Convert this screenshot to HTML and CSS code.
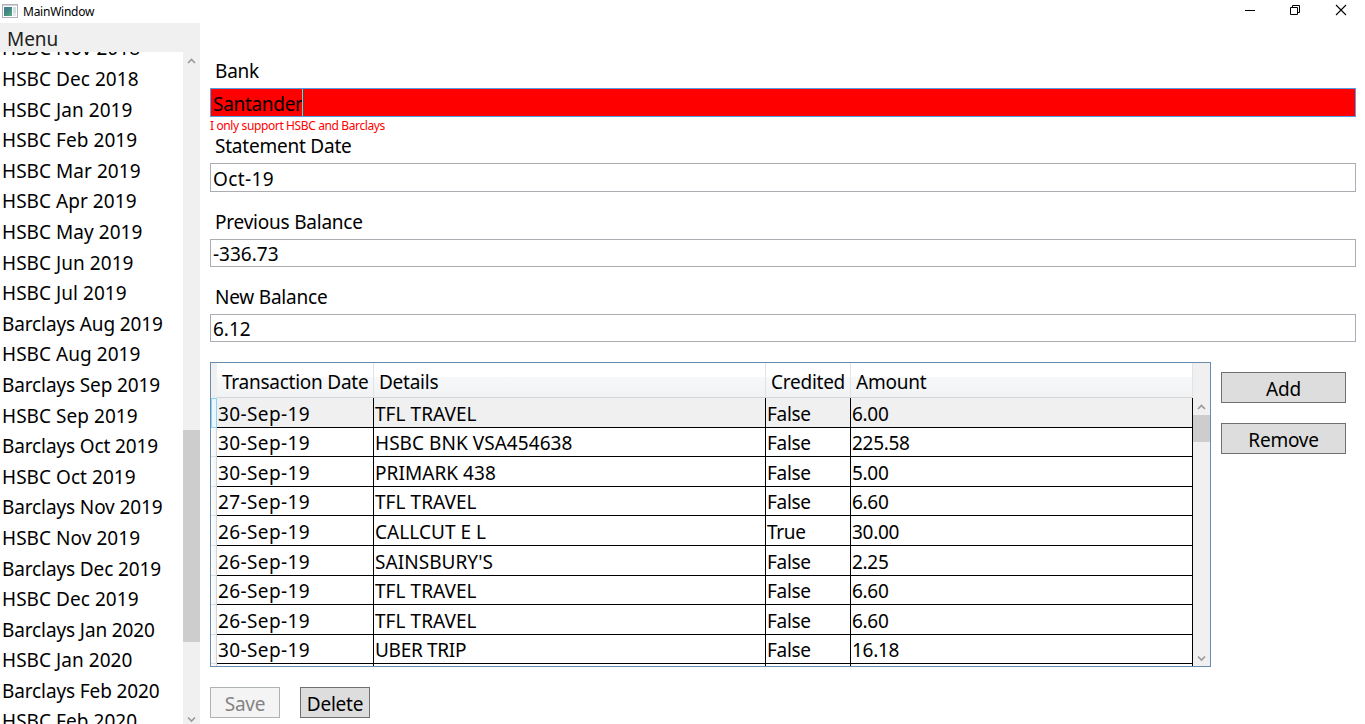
FILE: index.html
```html
<!DOCTYPE html>
<html lang="en">
<head>
<meta charset="utf-8">
<title>MainWindow</title>
<link rel="stylesheet" href="styles.css">
</head>
<body>
<div class="window">
  <header class="titlebar">
    <svg class="app-icon" width="16" height="14" viewBox="0 0 16 14"><defs><linearGradient id="pane" x2="1" y2="1"><stop offset="0" stop-color="#4a7396"/><stop offset=".5" stop-color="#3f8a85"/><stop offset="1" stop-color="#62ad7c"/></linearGradient></defs><rect x=".5" y=".5" width="15" height="13" fill="#fff" stroke="#b0b2ba"/><rect x="1" y="1" width="14" height="1" fill="#d4d4da"/><rect x="2" y="3" width="8" height="9" fill="url(#pane)"/><rect x="11" y="3" width="3" height="6" fill="#cfe0df"/><rect x="11" y="9" width="3" height="3" fill="#e6e9ee"/></svg>
    <span class="title">MainWindow</span>
    <div class="controls">
      <svg width="46" height="22" viewBox="0 0 46 22"><path d="M11 10.5h10" stroke="#000"/></svg>
      <svg width="46" height="22" viewBox="0 0 46 22"><path d="M10.500 7.500h7v7h-7zM12.500 7V5.500h7v7H18" fill="none" stroke="#000"/></svg>
      <svg width="46" height="22" viewBox="0 0 46 22"><path d="M10 5l10 10M20 5L10 15" stroke="#000" stroke-width="1.1"/></svg>
    </div>
  </header>
  <div class="body">
    <aside class="sidebar">
      <div class="menu">Menu</div>
      <div class="list-wrap">
        <ul class="list">
          <li>HSBC Nov 2018</li><li>HSBC Dec 2018</li><li>HSBC Jan 2019</li><li>HSBC Feb 2019</li><li>HSBC Mar 2019</li><li>HSBC Apr 2019</li><li>HSBC May 2019</li><li>HSBC Jun 2019</li><li>HSBC Jul 2019</li><li class="long">Barclays Aug 2019</li><li>HSBC Aug 2019</li><li class="long">Barclays Sep 2019</li><li>HSBC Sep 2019</li><li class="long">Barclays Oct 2019</li><li>HSBC Oct 2019</li><li class="long">Barclays Nov 2019</li><li>HSBC Nov 2019</li><li class="long">Barclays Dec 2019</li><li>HSBC Dec 2019</li><li class="long">Barclays Jan 2020</li><li>HSBC Jan 2020</li><li class="long">Barclays Feb 2020</li><li>HSBC Feb 2020</li>
        </ul>
        <div class="scrollbar">
          <svg width="17" height="17" viewBox="0 0 17 17"><path d="M5 11l3.500-3.500L12 11" class="chev"/></svg>
          <div class="thumb list-thumb"></div>
          <svg class="down" width="17" height="17" viewBox="0 0 17 17"><path d="M5 10.500l3.500 3.500L12 10.500" class="chev"/></svg>
        </div>
      </div>
    </aside>
    <main class="main">
      <div class="field"><label>Bank</label><div class="input invalid"><span class="value">Santander</span><i class="caret"></i></div><div class="error">I only support HSBC and Barclays</div></div>
      <div class="field"><label>Statement Date</label><div class="input date">Oct-19</div></div>
      <div class="field"><label>Previous Balance</label><div class="input number">-336.73</div></div>
      <div class="field"><label>New Balance</label><div class="input number">6.12</div></div>
      <div class="data">
        <div class="grid">
          <div class="grid-main">
            <div class="head"><span class="rh"></span><span>Transaction Date</span><span>Details</span><span>Credited</span><span>Amount</span></div>
            <div class="row current"><span class="rh"></span><span class="date">30-Sep-19</span><span class="details">TFL TRAVEL</span><span>False</span><span>6.00</span></div>
            <div class="row"><span class="rh"></span><span class="date">30-Sep-19</span><span class="details">HSBC BNK VSA454638</span><span>False</span><span>225.58</span></div>
            <div class="row"><span class="rh"></span><span class="date">30-Sep-19</span><span class="details">PRIMARK 438</span><span>False</span><span>5.00</span></div>
            <div class="row"><span class="rh"></span><span class="date">27-Sep-19</span><span class="details">TFL TRAVEL</span><span>False</span><span>6.60</span></div>
            <div class="row"><span class="rh"></span><span class="date">26-Sep-19</span><span class="details">CALLCUT E L</span><span>True</span><span>30.00</span></div>
            <div class="row"><span class="rh"></span><span class="date">26-Sep-19</span><span class="details">SAINSBURY'S</span><span>False</span><span>2.25</span></div>
            <div class="row"><span class="rh"></span><span class="date">26-Sep-19</span><span class="details">TFL TRAVEL</span><span>False</span><span>6.60</span></div>
            <div class="row"><span class="rh"></span><span class="date">26-Sep-19</span><span class="details">TFL TRAVEL</span><span>False</span><span>6.60</span></div>
            <div class="row"><span class="rh"></span><span class="date">30-Sep-19</span><span class="merchant">UBER TRIP</span><span>False</span><span>16.18</span></div>
            <div class="row"><span class="rh"></span><span></span><span></span><span></span><span></span></div>
          </div>
          <div class="scrollbar grid-scroll">
            <svg width="17" height="17" viewBox="0 0 17 17"><path d="M5 11l3.500-3.500L12 11" class="chev"/></svg>
            <div class="thumb grid-thumb"></div>
            <svg class="down" width="17" height="17" viewBox="0 0 17 17"><path d="M5 7.500l3.500 3.500L12 7.500" class="chev"/></svg>
          </div>
        </div>
        <div class="side"><button>Add</button><button>Remove</button></div>
      </div>
      <div class="actions"><button disabled>Save</button><button>Delete</button></div>
    </main>
  </div>
</div>
</body>
</html>
```
FILE: styles.css
```css
* { box-sizing: border-box; }
body { margin: 0; font: 19px/26.6px "Noto Sans", sans-serif; letter-spacing: -0.3px; color: #000; background: #fff; overflow: hidden; }
.window { width: 1365px; height: 724px; display: flex; flex-direction: column; overflow: hidden; }
.titlebar { height: 23px; flex: none; display: flex; align-items: flex-start; }
.app-icon { margin: 4px 0 0 2px; }
.title { font-size: 12px; line-height: 16px; margin: 4px 0 0 5px; letter-spacing: -0.25px; }
.controls { display: flex; margin-left: auto; margin-right: -7px; }
.body { flex: 1; display: flex; min-height: 0; }
.sidebar { width: 200px; flex: none; display: flex; flex-direction: column; }
.menu { height: 29px; flex: none; background: #f0f0f0; color: #212121; padding: 3px 7px; letter-spacing: -0.1px; }
.list-wrap { flex: 1; display: flex; overflow: hidden; min-height: 0; }
.list { list-style: none; margin: -18.600px 0 0; padding: 0; flex: 1; }
.list li { height: 30.6px; padding: 2px; white-space: nowrap; letter-spacing: 0.05px; }
.list .long { letter-spacing: -0.12px; }
.scrollbar { width: 17px; flex: none; background: #f0f0f0; display: flex; flex-direction: column; }
.scrollbar svg { display: block; flex: none; }
.down { margin-top: auto; }
.chev { fill: none; stroke: #999; stroke-width: 1.6; }
.thumb { background: #cdcdcd; flex: none; }
.list-thumb { height: 212px; margin-top: 361px; }
.main { flex: 1; padding: 30px 9px 0 10px; min-width: 0; }
.field { height: 75.3px; }
.field label { display: block; padding: 5px 5px 0; height: 35px; line-height: 27px; letter-spacing: -0.22px; }
.input { height: 28.500px; border: 1px solid #abadb3; padding: 2px 2px 0; display: flex; }
.input.number { letter-spacing: 0; padding-top: 1.500px; }
.invalid { height: 29px; background: #f00; border-color: #569de5; padding-top: 0; }
.invalid .value { padding-top: 2px; width: 89px; }
.caret { width: 1px; flex: none; height: 27px; background: #0ff; }
.error { color: #f00; font-size: 12px; line-height: 16px; margin-top: 1px; letter-spacing: -0.38px; }
.data { display: flex; margin-top: 7.800px; gap: 10px; }
.grid { width: 1001px; height: 305px; border: 1px solid #688caf; display: flex; overflow: hidden; }
.grid-main { width: 982px; flex: none; }
.head, .row { display: grid; grid-template-columns: 6px 157px 392px 85px 342px; white-space: nowrap; }
.head { height: 35px; background: linear-gradient(#fff 0, #fff 40%, #f7f8fa 40%, #f1f2f4 100%); letter-spacing: -0.25px; }
.head span { border-right: 1px solid #e1e3e6; border-bottom: 1px solid #d5d5d5; padding: 6px 0 0 5px; }
.head .rh { background: #f0f0f0; border: 0; padding: 0; }
.row { height: 29.6px; grid-template-rows: 29.6px; line-height: 26px; }
.row span { border-right: 1px solid #000; border-bottom: 1px solid #000; padding: 2.600px 0 0 1px; }
.row .rh { background: linear-gradient(90deg, #fff, #f3f4f6); border-right-color: #d5d5d5; border-bottom-color: #ddd; }
.row .date { letter-spacing: 0.38px; }
.date { letter-spacing: 0.38px; }
.details { letter-spacing: 0.05px; }
.current { background: #f0f0f0; }
.current .rh { background: #eaf7fd; border: 1px solid #8fd3f5; }
.grid-scroll { padding-top: 35px; }
.grid-thumb { height: 27px; }
.side { width: 125px; padding-top: 10px; display: flex; flex-direction: column; gap: 20px; }
button { font: inherit; letter-spacing: -0.25px; color: #000; background: #ddd; border: 1px solid #707070; height: 31px; padding: 3px 0 0; }
button:disabled { background: #f4f4f4; border-color: #adb2b5; color: #838383; }
.actions { display: flex; gap: 20px; margin-top: 20px; }
.actions button { width: 70px; }
```
